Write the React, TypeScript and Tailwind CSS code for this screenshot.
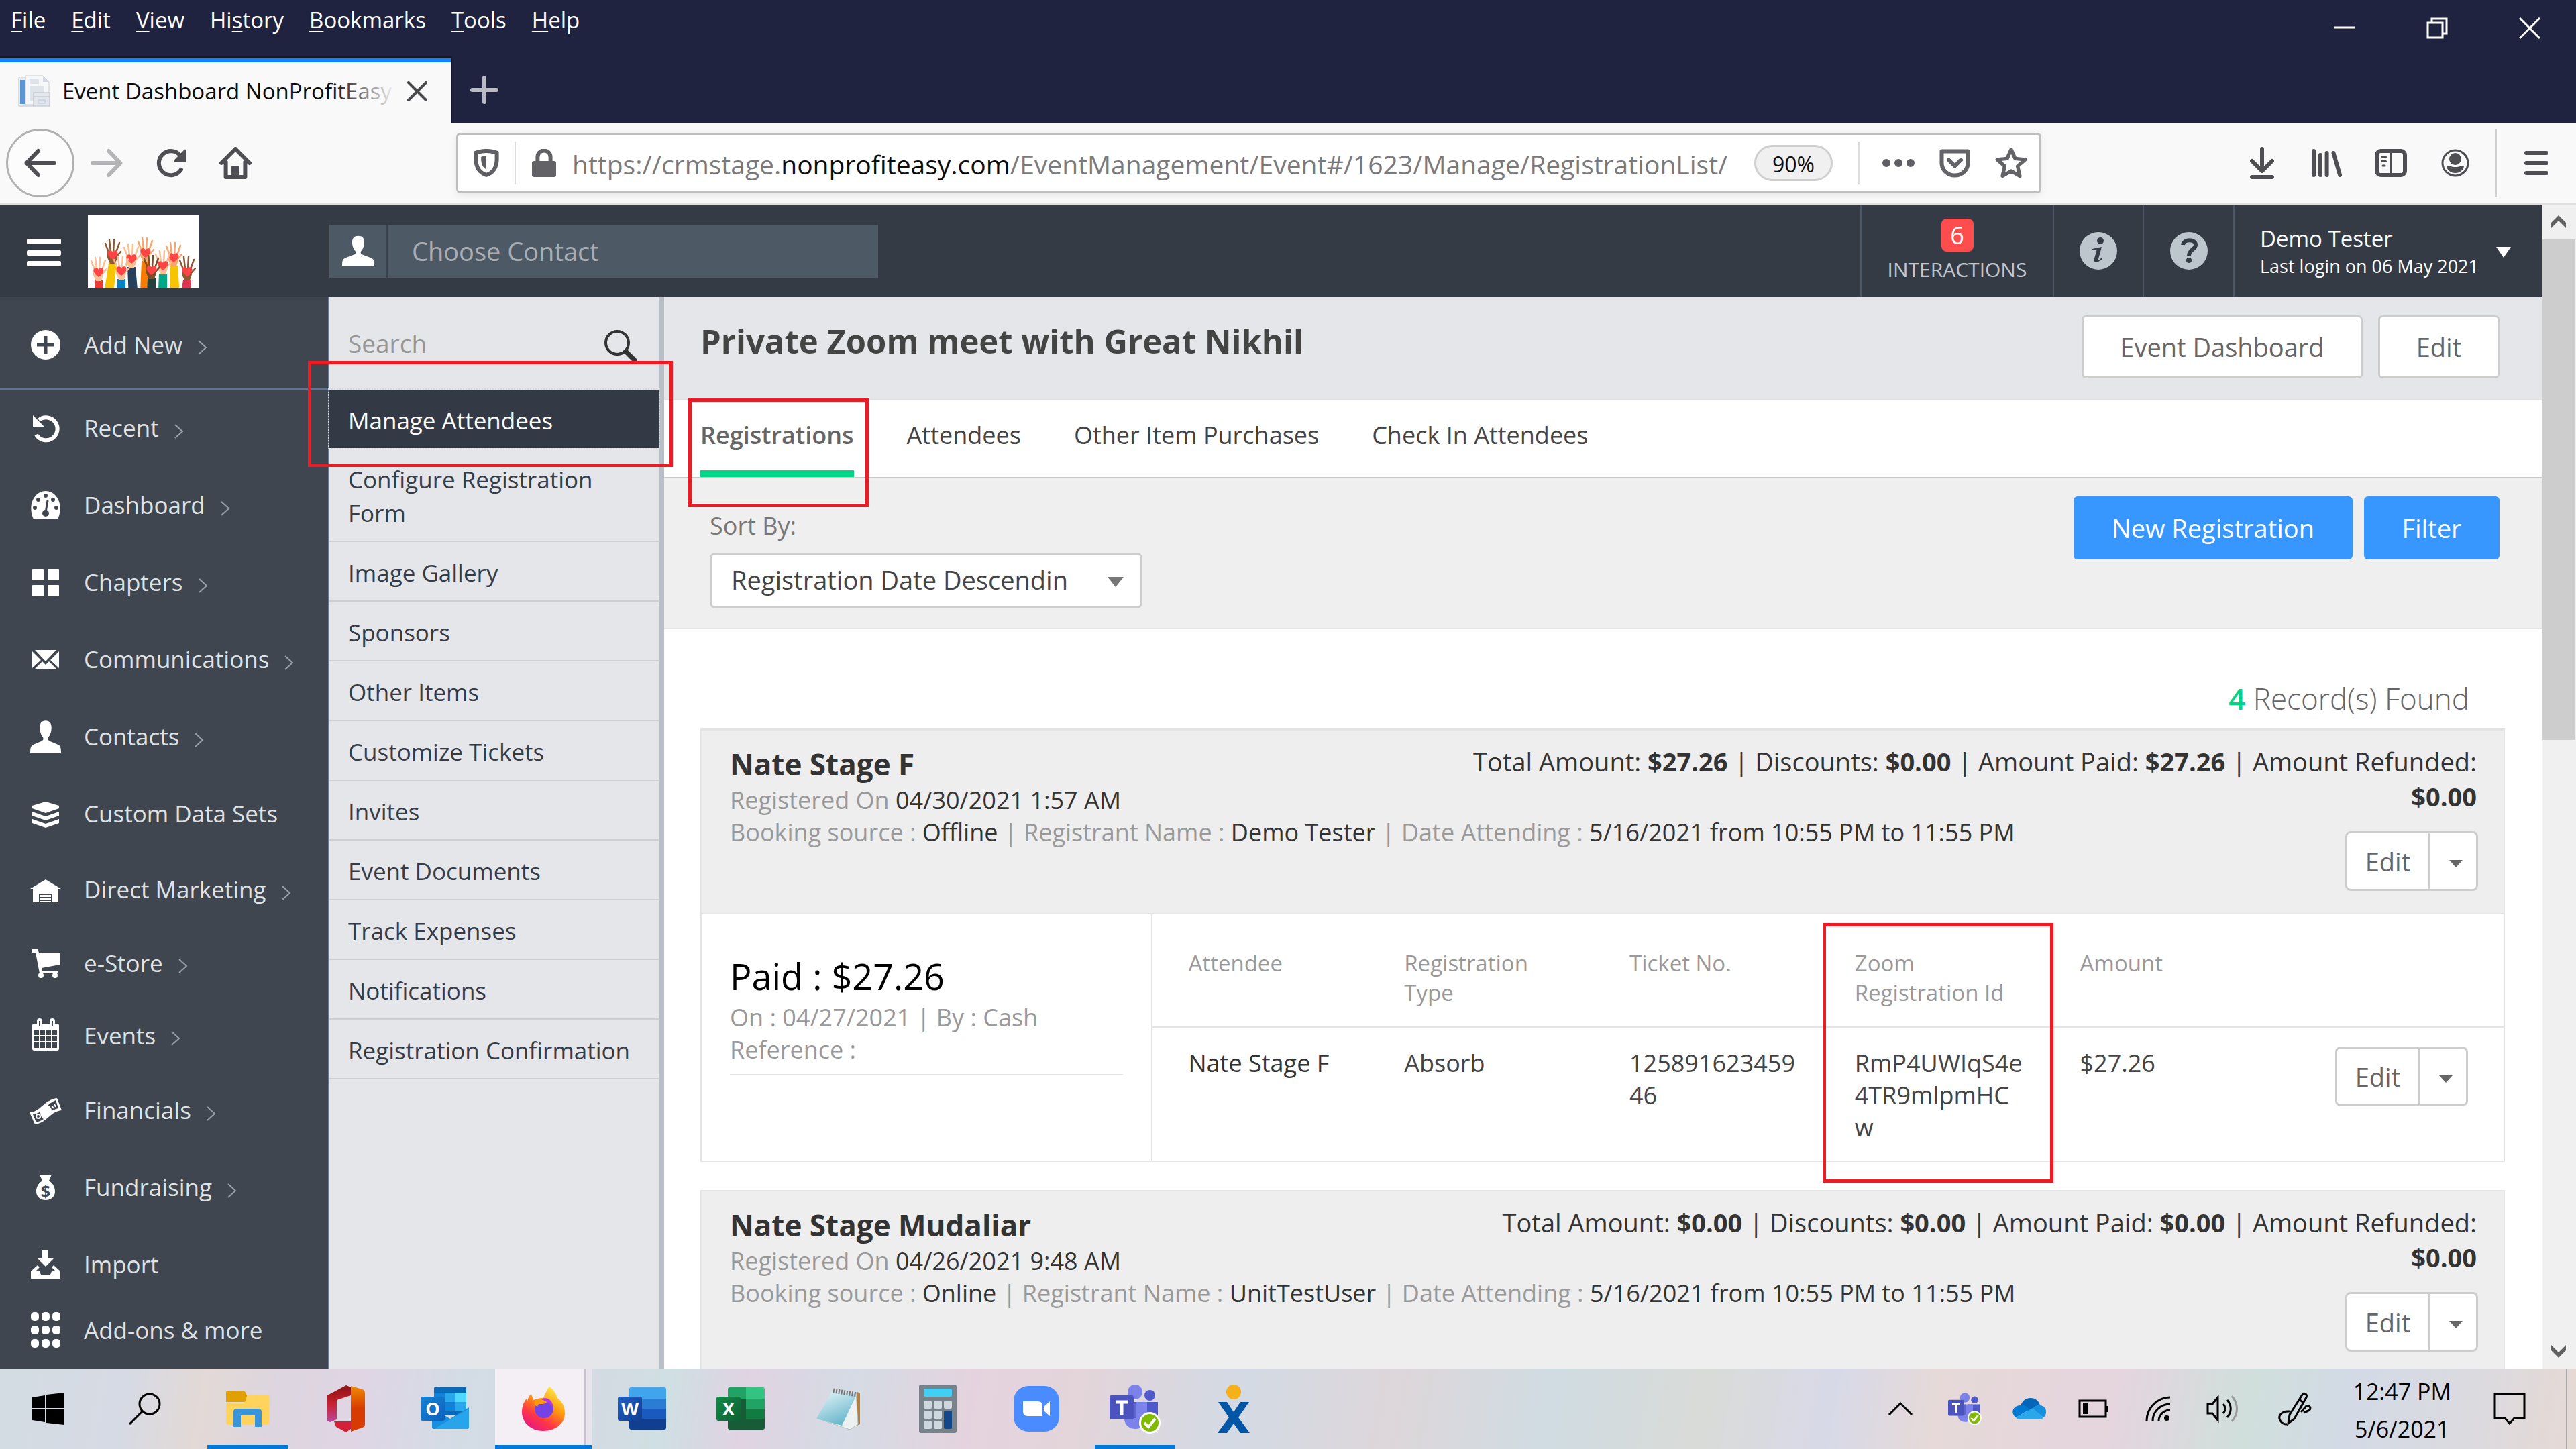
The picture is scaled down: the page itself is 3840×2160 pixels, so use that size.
import type { ReactNode } from "react";

const menus = [
  { pre: "", key: "F", rest: "ile" },
  { pre: "", key: "E", rest: "dit" },
  { pre: "", key: "V", rest: "iew" },
  { pre: "Hi", key: "s", rest: "tory" },
  { pre: "", key: "B", rest: "ookmarks" },
  { pre: "", key: "T", rest: "ools" },
  { pre: "", key: "H", rest: "elp" },
];

type Totals = { total: string; discounts: string; paid: string; refunded: string };

type Attendee = {
  name: string;
  type: string;
  ticket: string;
  zoomId: string;
  amount: string;
};

type Registration = {
  name: string;
  registeredOn: string;
  source: string;
  registrant: string;
  attending: string;
  totals: Totals;
  payment?: { amount: string; on: string; by: string };
  attendees: Attendee[];
};

const registrations: Registration[] = [
  {
    name: "Nate Stage F",
    registeredOn: "04/30/2021 1:57 AM",
    source: "Offline",
    registrant: "Demo Tester",
    attending: "5/16/2021 from 10:55 PM to 11:55 PM",
    totals: { total: "$27.26", discounts: "$0.00", paid: "$27.26", refunded: "$0.00" },
    payment: { amount: "$27.26", on: "04/27/2021", by: "Cash" },
    attendees: [
      {
        name: "Nate Stage F",
        type: "Absorb",
        ticket: "12589162345946",
        zoomId: "RmP4UWIqS4e4TR9mlpmHCw",
        amount: "$27.26",
      },
    ],
  },
  {
    name: "Nate Stage Mudaliar",
    registeredOn: "04/26/2021 9:48 AM",
    source: "Online",
    registrant: "UnitTestUser",
    attending: "5/16/2021 from 10:55 PM to 11:55 PM",
    totals: { total: "$0.00", discounts: "$0.00", paid: "$0.00", refunded: "$0.00" },
    attendees: [],
  },
];

const subMenu = [
  "Image Gallery",
  "Sponsors",
  "Other Items",
  "Customize Tickets",
  "Invites",
  "Event Documents",
  "Track Expenses",
  "Notifications",
  "Registration Confirmation",
];

/* ---------- Sidebar icons, all on a 48 grid ---------- */

function Glyph({ children }: { children: ReactNode }) {
  return (
    <svg width="48" height="56" viewBox="0 -4 48 56" fill="#fff" className="shrink-0" aria-hidden="true">
      {children}
    </svg>
  );
}

const PersonPath =
  "M24 -3c-6 0-9 4-9 11 0 6 1 11 5 17 1 3 0 5-3 6L4 37c-3 2-4 5-4 14h48c0-9-1-12-4-14l-13-6c-3-1-4-3-3-6 4-6 5-11 5-17 0-7-3-11-9-11z";

const icons: Record<string, ReactNode> = {
  add: (
    <Glyph>
      <circle cx="24" cy="24" r="22" />
      <path d="M24 11v26M11 24h26" stroke="#404650" strokeWidth="5" />
    </Glyph>
  ),
  recent: (
    <Glyph>
      <path d="M14 11a17 17 0 1 1-4 22" fill="none" stroke="#fff" strokeWidth="6" />
      <path d="M5 4v17h17z" />
    </Glyph>
  ),
  dashboard: (
    <Glyph>
      <path d="M6 44C-4 22 8 2 24 2s28 20 18 42z" />
      <g fill="#404650">
        <circle cx="24" cy="9" r="3" />
        <circle cx="13" cy="15" r="3" />
        <circle cx="35" cy="15" r="3" />
        <circle cx="8" cy="27" r="3" />
        <circle cx="40" cy="27" r="3" />
        <circle cx="24" cy="35" r="5" />
      </g>
      <path d="M24 34l3-18" stroke="#404650" strokeWidth="3" />
    </Glyph>
  ),
  chapters: (
    <Glyph>
      <rect x="4" y="3" width="17" height="17" rx="1" />
      <rect x="27" y="3" width="17" height="17" rx="1" />
      <rect x="4" y="27" width="17" height="17" rx="1" />
      <rect x="27" y="27" width="17" height="17" rx="1" />
    </Glyph>
  ),
  mail: (
    <Glyph>
      <path d="M8 9h32L24 26zM4 11l13 13L4 36zM44 11L31 24l13 12zM7 38l12-12 5 5 5-5 12 12z" />
    </Glyph>
  ),
  contacts: (
    <Glyph>
      <path d={PersonPath} transform="translate(1 2) scale(.96 .9)" />
    </Glyph>
  ),
  data: (
    <Glyph>
      <path d="M24 5l20 6v4l-20 7-20-7v-4z" />
      <path d="M4 20l20 7 20-7v6l-20 7-20-7zM4 31l20 7 20-7v6l-20 7-20-7z" />
    </Glyph>
  ),
  marketing: (
    <Glyph>
      <path d="M24 8l23 14h-4v20H5V22H1z" />
      <path d="M15 42V30h18v12M15 35h18M15 39h18" fill="none" stroke="#404650" strokeWidth="2" />
    </Glyph>
  ),
  store: (
    <Glyph>
      <path d="M3 3h9l2 5h31v18l-27 5 1 4h24v4H15L9 8H3z" />
      <circle cx="17" cy="42" r="4" />
      <circle cx="38" cy="42" r="4" />
    </Glyph>
  ),
  events: (
    <Glyph>
      <rect x="4" y="6" width="40" height="40" rx="3" />
      <rect x="11" y="-2" width="8" height="14" rx="4" />
      <rect x="30" y="-2" width="8" height="14" rx="4" />
      <path d="M15 2v8M34 2v8" stroke="#404650" strokeWidth="2" />
      <path
        d="M7 16h7v7H7zM16 16h7v7h-7zM25 16h7v7h-7zM34 16h7v7h-7zM7 25h7v7H7zM16 25h7v7h-7zM25 25h7v7h-7zM34 25h7v7h-7zM7 34h7v8H7zM16 34h7v8h-7zM25 34h7v8h-7zM34 34h7v8h-7z"
        fill="#404650"
      />
    </Glyph>
  ),
  financials: (
    <Glyph>
      <path d="M0 26c16 0 22-19 41-21l7 18C30 25 26 42 8 44z" />
      <path d="M5 29c4 0 8-2 11-4 0 6 2 9 5 11-3 2-7 4-11 5zM27 16c3-3 7-6 12-8l4 12c-4 1-7 2-10 4 0-4-2-7-6-8z" fill="#404650" />
      <circle cx="13" cy="32" r="3" fill="none" stroke="#fff" strokeWidth="2" />
      <path d="M33 16l3 4M37 14l2 4" stroke="#fff" strokeWidth="2" />
    </Glyph>
  ),
  fundraising: (
    <Glyph>
      <path d="M15 4h18l-4 9h-10zM18 14h12c5 3 8 9 8 15 0 8-6 13-14 13s-14-5-14-13c0-6 3-12 8-15z" />
      <text x="24" y="38" textAnchor="middle" fontFamily="Open Sans, sans-serif" fontWeight="700" fontSize="25" fill="#404650">
        $
      </text>
    </Glyph>
  ),
  import: (
    <Glyph>
      <path d="M19 1h9v13h8L24 26 12 14h7z" />
      <path d="M12 24L2 33v11h44V33L36 24l-3 3 6 6h-6l-2 5H17l-2-5H9l6-6z" />
    </Glyph>
  ),
  addons: (
    <Glyph>
      {[4, 24, 44].map((y) =>
        [8, 24, 40].map((x) => <rect key={`${x}-${y}`} x={x - 6} y={y - 7} width="12" height="13" rx="5" />)
      )}
    </Glyph>
  ),
};

const sideLinks = [
  { label: "Recent", icon: "recent", more: true, height: "h-[115px]" },
  { label: "Dashboard", icon: "dashboard", more: true, height: "h-[115px]" },
  { label: "Chapters", icon: "chapters", more: true, height: "h-[115px]" },
  { label: "Communications", icon: "mail", more: true, height: "h-[115px]" },
  { label: "Contacts", icon: "contacts", more: true, height: "h-[115px]" },
  { label: "Custom Data Sets", icon: "data", more: false, height: "h-[115px]" },
  { label: "Direct Marketing", icon: "marketing", more: true, height: "h-[111px]" },
  { label: "e-Store", icon: "store", more: true, height: "h-[108px]" },
  { label: "Events", icon: "events", more: true, height: "h-[108px]" },
  { label: "Financials", icon: "financials", more: true, height: "h-[115px]" },
  { label: "Fundraising", icon: "fundraising", more: true, height: "h-[115px]" },
  { label: "Import", icon: "import", more: false, height: "h-[115px]" },
  { label: "Add-ons & more", icon: "addons", more: false, height: "h-[80px]" },
];

function MoreArrow() {
  return (
    <svg width="16" height="28" viewBox="0 0 16 28" fill="none" stroke="#9a9fa6" strokeWidth="2" className="mt-2 ml-[22px]">
      <path d="M2 4l11 10L2 24" />
    </svg>
  );
}

/* ---------- Browser chrome ---------- */

function TitleBar() {
  return (
    <div className="bg-[#20233f]">
      <div className="flex items-start justify-between text-white">
        <nav className="flex h-[60px] items-center gap-[38px] pl-4 text-[33px]">
          {menus.map((m) => (
            <button key={m.key + m.rest}>
              {m.pre}
              <span className="underline decoration-2 underline-offset-4">{m.key}</span>
              {m.rest}
            </button>
          ))}
        </nav>
        <div className="flex h-[84px] items-center">
          <button aria-label="Minimize" className="flex w-[138px] justify-center">
            <svg width="32" height="32" viewBox="0 0 32 32">
              <path d="M0 15h32" stroke="#fff" strokeWidth="3" />
            </svg>
          </button>
          <button aria-label="Restore" className="flex w-[138px] justify-center">
            <svg width="32" height="32" viewBox="0 0 32 32" fill="none" stroke="#fff" strokeWidth="3">
              <path d="M2 8h22v22H2zM8 8V2h22v22h-6" />
            </svg>
          </button>
          <button aria-label="Close" className="flex w-[138px] justify-center">
            <svg width="32" height="32" viewBox="0 0 32 32" stroke="#fff" strokeWidth="3">
              <path d="M1 1l30 30M31 1L1 31" />
            </svg>
          </button>
        </div>
      </div>
      <div className="flex h-[99px]">
        <div className="w-[674px] border-t-[3px] border-r-2 border-[#16172c]">
          <div className="flex h-full items-center border-t-[6px] border-[#0a84ff] bg-[#f9f9fa] pb-1 pl-[27px]">
            <svg width="48" height="48" viewBox="0 0 48 48" className="shrink-0">
              <rect x="1" y="4" width="22" height="42" fill="#e7edf4" stroke="#b9c3cf" />
              <rect x="3" y="7" width="9" height="36" fill="#5b93d3" />
              <path d="M11 1h26l9 9v34H11z" fill="#f6f7f9" stroke="#c7ccd3" />
              <path d="M37 1v9h9z" fill="#d6dae0" />
              <path d="M17 6h14v7H17zM17 16h22v22H17z" fill="#dfe3ea" />
              <rect x="23" y="26" width="24" height="20" fill="#e3e7ed" stroke="#b9bfc8" />
              <path d="M23 32h24" stroke="#b9bfc8" />
              <rect x="30" y="37" width="10" height="5" fill="none" stroke="#b9c9de" />
            </svg>
            <div className="relative ml-[18px] w-[498px] overflow-hidden text-[33px] whitespace-nowrap text-[#0c0c0d]">
              Event Dashboard NonProfitEasy
              <div className="absolute inset-y-0 right-0 w-24 bg-linear-to-r from-transparent to-[#f9f9fa]" />
            </div>
            <button aria-label="Close tab" className="ml-4">
              <svg width="30" height="30" viewBox="0 0 30 30" stroke="#4a4a4f" strokeWidth="4" strokeLinecap="round">
                <path d="M2 2l26 26M28 2L2 28" />
              </svg>
            </button>
          </div>
        </div>
        <button aria-label="New tab" className="flex w-24 items-center justify-center">
          <svg width="42" height="42" viewBox="0 0 42 42" stroke="#b9bac4" strokeWidth="6" strokeLinecap="round">
            <path d="M21 3v36M3 21h36" />
          </svg>
        </button>
      </div>
    </div>
  );
}

function ToolButton({ label, wide, children }: { label: string; wide?: boolean; children: ReactNode }) {
  return (
    <button aria-label={label} className={`flex shrink-0 items-center justify-center ${wide ? "w-24" : "w-[84px]"}`}>
      {children}
    </button>
  );
}

function Toolbar() {
  return (
    <div className="flex h-[123px] items-center border-b-[3px] border-[#e0e0e1] bg-[#f9f9fa] pl-[9px]">
      <button
        aria-label="Back"
        className="flex size-[102px] shrink-0 items-center justify-center rounded-full border-[3px] border-[#b1b1b1] bg-[#fcfcfc]"
      >
        <svg width="48" height="48" viewBox="0 0 16 16" fill="none" stroke="#4f4f53" strokeWidth="2" strokeLinecap="round" strokeLinejoin="round">
          <path d="M15 8H1.500M7 2L1.200 8 7 14" />
        </svg>
      </button>
      <ToolButton label="Forward" wide>
        <svg width="48" height="48" viewBox="0 0 16 16" fill="none" stroke="#b4b4b6" strokeWidth="2" strokeLinecap="round" strokeLinejoin="round">
          <path d="M1 8h13.500M9 2l5.800 6L9 14" />
        </svg>
      </ToolButton>
      <ToolButton label="Reload" wide>
        <svg width="48" height="48" viewBox="0 0 16 16" fill="none" stroke="#4f4f53" strokeWidth="2" strokeLinecap="round">
          <path d="M13 11.300A6 6 0 1 1 12.800 4.500" />
          <path d="M15 1.700V7H9.800z" fill="#4f4f53" stroke="#4f4f53" strokeWidth="1" strokeLinejoin="round" />
        </svg>
      </ToolButton>
      <ToolButton label="Home" wide>
        <svg width="48" height="48" viewBox="0 0 16 16" fill="none" stroke="#4f4f53" strokeWidth="2" strokeLinecap="round" strokeLinejoin="round">
          <path d="M1 8l7-7 7 7M3.200 7.500V15h9.600V7.500" />
          <path d="M6.500 15v-5h3v5z" fill="#4f4f53" strokeWidth="1" />
        </svg>
      </ToolButton>

      <div className="mx-[281px] flex h-[90px] min-w-0 flex-1 items-center rounded-md border-[3px] border-[#bebebe] bg-white shadow-[0_3px_12px_rgba(0,0,0,0.08)]">
        <ToolButton label="Tracking protection">
          <svg width="42" height="42" viewBox="0 0 14 14" fill="#5f5f63">
            <path d="M7 0C5 0 2.500.500 1.300 1 1 1.100.8 1.400.8 1.700V5c0 5 2.500 8 6.200 9 3.700-1 6.200-4 6.200-9V1.700c0-.3-.2-.6-.5-.7C11.500.5 9 0 7 0zm0 2c1.500 0 3 .3 4.200.7V5c0 3.800-1.600 6-4.200 6.900C4.400 11 2.800 8.800 2.800 5V2.700C4 2.300 5.500 2 7 2z" />
            <path d="M7 3.500c-1 0-1.800.1-2.600.4V5c0 2.600.9 4.300 2.600 5.200z" />
          </svg>
        </ToolButton>
        <span className="h-16 w-[2px] bg-[#dcdcde]" />
        <ToolButton label="Connection secure">
          <svg width="42" height="42" viewBox="0 0 14 14" fill="#636367">
            <rect x="1" y="6" width="12" height="8" rx="1" />
            <path d="M3.800 6.500V4a3.200 3.200 0 0 1 6.400 0v2.500" fill="none" stroke="#636367" strokeWidth="2" />
          </svg>
        </ToolButton>
        <div role="textbox" aria-label="Address" className="min-w-0 flex-1 overflow-hidden pt-1 text-[39px] whitespace-nowrap text-[#7a7a7c]">
          https://crmstage.<span className="text-[#0c0c0d]">nonprofiteasy.com</span>
          /EventManagement/Event#/1623/Manage/RegistrationList/
        </div>
        <button className="mr-[38px] flex h-[54px] w-[117px] shrink-0 items-center justify-center rounded-full border-[3px] border-[#cfcfd0] bg-[#f0f0f1] pt-1 text-[32px] text-[#0c0c0d]">
          90%
        </button>
        <span className="mr-4 h-16 w-[2px] bg-[#dcdcde]" />
        <ToolButton label="Page actions">
          <svg width="50" height="14" viewBox="0 0 50 14" fill="#5f5f63">
            <circle cx="7" cy="7" r="6" />
            <circle cx="25" cy="7" r="6" />
            <circle cx="43" cy="7" r="6" />
          </svg>
        </ToolButton>
        <ToolButton label="Save to Pocket">
          <svg width="48" height="48" viewBox="0 0 16 16" fill="none" stroke="#636367" strokeWidth="2" strokeLinecap="round" strokeLinejoin="round">
            <path d="M1.500 2.200h13V8A6.500 6.200 0 0 1 1.500 8z" />
            <path d="M5 6.500l3 3 3-3" />
          </svg>
        </ToolButton>
        <ToolButton label="Bookmark this page">
          <svg width="48" height="48" viewBox="0 0 16 16" fill="none" stroke="#636367" strokeWidth="1.800" strokeLinejoin="round">
            <path d="M8 1.300l2 4.500 4.900.5-3.700 3.300 1.100 4.900L8 12l-4.300 2.500 1.100-4.900L1.100 6.300 6 5.800z" />
          </svg>
        </ToolButton>
      </div>

      <ToolButton label="Downloads" wide>
        <svg width="48" height="48" viewBox="0 0 16 16" fill="none" stroke="#4f4f53" strokeWidth="2" strokeLinecap="round" strokeLinejoin="round">
          <path d="M8 1v10M3 7l5 5 5-5M3 15h10" />
        </svg>
      </ToolButton>
      <ToolButton label="Library" wide>
        <svg width="48" height="48" viewBox="0 0 16 16" fill="none" stroke="#4f4f53" strokeWidth="2" strokeLinecap="round">
          <path d="M1.700 2v12M5 4v10M8.200 3v11M11.500 3l3.200 11" />
        </svg>
      </ToolButton>
      <ToolButton label="Sidebars" wide>
        <svg width="48" height="48" viewBox="0 0 16 16" fill="none" stroke="#4f4f53" strokeWidth="2" strokeLinecap="round">
          <rect x="1" y="2" width="14" height="12" rx="2" />
          <path d="M8 2v12" strokeWidth="1" />
          <path d="M3.500 5h2M3.500 7.200h2M4 9.300h1" strokeWidth="1" />
        </svg>
      </ToolButton>
      <ToolButton label="Account" wide>
        <svg width="44" height="44" viewBox="0 0 44 44">
          <circle cx="22" cy="22" r="19" fill="none" stroke="#4f4f53" strokeWidth="3" />
          <circle cx="22" cy="16" r="9" fill="#4f4f53" />
          <path d="M9 26c4 0 7 2 13 2s9-2 13-2c0 6-6 11-13 11S9 32 9 26z" fill="#4f4f53" />
        </svg>
      </ToolButton>
      <span className="ml-3 h-[102px] w-[2px] bg-[#cfcfd0]" />
      <button aria-label="Open menu" className="flex w-[118px] shrink-0 justify-center">
        <svg width="36" height="36" viewBox="0 0 36 36" stroke="#4f4f53" strokeWidth="6" strokeLinecap="round">
          <path d="M3 3h30M3 18h30M3 33h30" />
        </svg>
      </button>
    </div>
  );
}

/* ---------- App header ---------- */

const hands = [
  { x: 86, y: 55, skin: "#f6a76b", sleeve: "#f57c00", lean: 0 },
  { x: 37, y: 58, skin: "#8d5a33", sleeve: "#f7c500", lean: -5 },
  { x: 65, y: 64, skin: "#fbc093", sleeve: "#24405a", lean: 4 },
  { x: 128, y: 62, skin: "#f6a76b", sleeve: "#f7c500", lean: 3 },
  { x: 16, y: 84, skin: "#fbc093", sleeve: "#ee3932", lean: 3 },
  { x: 50, y: 82, skin: "#fbc093", sleeve: "#0082c3", lean: 0 },
  { x: 112, y: 74, skin: "#fbc093", sleeve: "#00a885", lean: 0 },
  { x: 95, y: 81, skin: "#7b4b2a", sleeve: "#26413c", lean: 0 },
  { x: 148, y: 83, skin: "#8d5a33", sleeve: "#dc3550", lean: -4 },
];

function Logo() {
  return (
    <svg width="165" height="109" viewBox="0 0 165 109" className="ml-10 shrink-0 bg-white" role="img" aria-label="Organization logo">
      {hands.map((h) => (
        <g key={h.x} transform={`translate(${h.x} ${h.y})`}>
          <path d={`M-6 14h12l${h.lean} 46h-14z`} fill={h.sleeve} />
          <g stroke={h.skin} strokeWidth="2.500" strokeLinecap="round">
            <path d="M-6 -2l-5 -13M-3 -3l-2 -17M1 -3l1 -17M5 -2l5 -14M6 4l6 -7" />
          </g>
          <path d="M-8 -3h15v9l-3 9h-8l-4-9z" fill={h.skin} />
          <path d="M0 9c-8-6-8-9-7-12 2-3 6-2 7 1 1-3 5-4 7-1 1 3 1 6-7 12z" fill="#ff4446" />
        </g>
      ))}
    </svg>
  );
}

function AppHeader() {
  return (
    <header className="flex h-[136px] shrink-0 items-center bg-[#353b45]">
      <button aria-label="Toggle navigation" className="ml-10 pt-[6px]">
        <svg width="51" height="42" viewBox="0 0 51 42" fill="#fff">
          <rect width="51" height="8" rx="2" />
          <rect y="17" width="51" height="8" rx="2" />
          <rect y="33" width="51" height="8" rx="2" />
        </svg>
      </button>
      <Logo />
      <div className="ml-[195px] flex h-[79px] w-[818px] bg-[#4d5964]">
        <div className="flex w-[87px] items-center justify-center border-r-2 border-[#39424c]">
          <svg width="48" height="46" viewBox="0 -4 48 56" preserveAspectRatio="none" fill="#fff">
            <path d={PersonPath} />
          </svg>
        </div>
        <input
          aria-label="Choose Contact"
          placeholder="Choose Contact"
          className="min-w-0 flex-1 bg-transparent pl-9 text-[38px] text-white outline-none placeholder:text-[#a8adb3]"
        />
      </div>
      <div className="ml-auto flex h-full">
        <a href="#interactions" className="flex w-[287px] flex-col items-center border-l-2 border-[#4b5666] pt-5">
          <span className="flex h-[49px] w-12 items-center justify-center rounded-lg bg-[#ff4c4c] text-[36px] text-white">6</span>
          <span className="mt-[7px] text-[30px] leading-10 text-[#c0c6cd]">INTERACTIONS</span>
        </a>
        <button aria-label="Information" className="flex w-[134px] items-center justify-center border-l-2 border-[#4b5666]">
          <svg width="58" height="58" viewBox="0 0 58 58">
            <circle cx="29" cy="29" r="28" fill="#bdc5cd" />
            <circle cx="32" cy="14" r="5" fill="#353b45" />
            <path d="M20 26c5-1 9-2 14-3l-5 18c-1 3 1 2 5-2l1 2c-8 7-14 6-12-1l3-10c1-3 0-3-6-2z" fill="#353b45" />
          </svg>
        </button>
        <button aria-label="Help" className="flex w-[135px] items-center justify-center border-l-2 border-[#4b5666]">
          <svg width="58" height="58" viewBox="0 0 58 58">
            <circle cx="29" cy="29" r="28" fill="#bdc5cd" />
            <path d="M20 20c1-9 19-9 19 0 0 7-10 7-10 16" fill="none" stroke="#353b45" strokeWidth="6" />
            <circle cx="29" cy="43" r="4" fill="#353b45" />
          </svg>
        </button>
        <button className="flex w-[460px] items-center border-l-2 border-[#4b5666] pt-1 pl-[38px] text-left text-white">
          <span className="leading-[41px]">
            <span className="block text-[33px]">Demo Tester</span>
            <span className="block text-[27px]">Last login on 06 May 2021</span>
          </span>
          <svg width="22" height="16" viewBox="0 0 22 16" fill="#fff" className="ml-[26px]">
            <path d="M0 0h22L11 16z" />
          </svg>
        </button>
      </div>
    </header>
  );
}

function Sidebar() {
  return (
    <nav className="w-[491px] shrink-0 border-r-2 border-[#69778a] bg-[#404650] text-[35px] text-[#dfe2e5]">
      <a href="#add" className="flex h-[139px] items-center border-b-[3px] border-[#64758c] pt-2 pl-11">
        {icons.add}
        <span className="ml-[33px]">Add New</span>
        <MoreArrow />
      </a>
      {sideLinks.map((l) => (
        <a key={l.label} href={`#${l.icon}`} className={`flex items-center pl-11 ${l.height}`}>
          {icons[l.icon]}
          <span className="ml-[33px]">{l.label}</span>
          {l.more && <MoreArrow />}
        </a>
      ))}
    </nav>
  );
}

function SubMenu() {
  return (
    <nav className="w-[499px] shrink-0 border-r-8 border-[#b8bfc6] bg-[#e4e6ea] text-[35px] leading-[50px] text-[#363c47]">
      <div className="flex h-[139px] items-center justify-between pr-8 pl-7">
        <input
          aria-label="Search"
          placeholder="Search"
          className="w-80 bg-transparent text-[37px] outline-none placeholder:text-[#969696]"
        />
        <svg width="50" height="50" viewBox="0 0 50 50" fill="none" stroke="#333" className="mt-2">
          <circle cx="20" cy="20" r="17" strokeWidth="4" />
          <path d="M33 33l13 13" strokeWidth="7" strokeLinecap="round" />
        </svg>
      </div>
      <a
        href="#manage"
        className="relative flex h-[87px] items-center bg-[#343a45] pt-1 pl-7 text-white outline-2 outline-[#d5d7da] outline-dotted"
      >
        Manage Attendees
        <span className="absolute -top-[43px] -right-[21px] -bottom-7 -left-8 z-10 border-[5px] border-[#ed1c24]" />
      </a>
      <a href="#form" className="block border-b-2 border-[#cbced2] pt-[22px] pr-12 pb-4 pl-7">
        Configure Registration Form
      </a>
      {subMenu.map((s) => (
        <a key={s} href="#sub" className="flex h-[89px] items-center border-b-2 border-[#cbced2] pt-1 pl-7 whitespace-nowrap">
          {s}
        </a>
      ))}
    </nav>
  );
}

/* ---------- Registrations ---------- */

function EditSplit() {
  return (
    <div className="inline-flex h-[89px] w-[198px] rounded-lg border-[3px] border-[#cdcdcd] bg-white text-[38px] text-[#666]">
      <button className="flex-1">Edit</button>
      <button aria-label="More actions" className="flex w-[71px] items-center justify-center border-l-2 border-[#cdcdcd] pl-2">
        <svg width="20" height="11" viewBox="0 0 20 11" fill="#666" className="mt-2">
          <path d="M0 0h20L10 11z" />
        </svg>
      </button>
    </div>
  );
}

function RegistrationCard({ reg }: { reg: Registration }) {
  const { totals, payment } = reg;
  return (
    <article className="mb-[42px] border-2 border-[#e3e4e4] text-[36px] leading-[48px] first-of-type:border-t-4">
      <div className="border-b-2 border-[#e3e4e4] bg-[#eee] pt-5 pr-[38px] pb-[33px] pl-[42px] text-[#999]">
        <div className="flex justify-between">
          <div>
            <h3 className="text-[44px] leading-[60px] font-bold text-[#333]">{reg.name}</h3>
            <p>
              Registered On <span className="text-[#333]">{reg.registeredOn}</span>
            </p>
          </div>
          <p className="w-[1520px] pr-[2px] text-right text-[38px] leading-[52px] text-[#333]">
            Total Amount: <b>{totals.total}</b> | Discounts: <b>{totals.discounts}</b> | Amount Paid: <b>{totals.paid}</b> | Amount
            Refunded: <b>{totals.refunded}</b>
          </p>
        </div>
        <div className="flex justify-between">
          <p>
            Booking source : <span className="text-[#333]">{reg.source}</span> | Registrant Name :{" "}
            <span className="text-[#333]">{reg.registrant}</span> | Date Attending : <span className="text-[#333]">{reg.attending}</span>
          </p>
          <div className="mt-[22px] flex">
            <EditSplit />
          </div>
        </div>
      </div>

      {payment && (
        <div className="flex">
          <div className="w-1/4 border-r-2 border-[#e3e4e4] px-[42px] pt-[54px] text-[#999]">
            <p className="text-[54px] leading-[76px] text-black">Paid : {payment.amount}</p>
            <div className="border-b-2 border-[#e3e4e4] pb-3">
              <p>
                On : {payment.on} | By : {payment.by}
              </p>
              <p>Reference :</p>
            </div>
          </div>
          <table className="w-3/4 table-fixed text-left align-top text-[#444]">
            <thead>
              <tr className="border-b-2 border-[#e3e4e4] align-top text-[33px] leading-[44px] text-[#999]">
                <th className="pt-[51px] pb-7 pl-[54px] font-normal">Attendee</th>
                <th className="pt-[51px] pr-[42px] pb-7 pl-10 font-normal">Registration Type</th>
                <th className="pt-[51px] pl-10 font-normal">Ticket No.</th>
                <th className="relative pt-[51px] pr-[42px] pb-7 pl-10 font-normal">
                  Zoom Registration Id
                  <span className="absolute top-[13px] right-0 -left-2 h-[387px] border-[5px] border-[#ed1c24]" />
                </th>
                <th className="pt-[51px] pl-10 font-normal">Amount</th>
                <th aria-label="Actions" />
              </tr>
            </thead>
            <tbody>
              {reg.attendees.map((a) => (
                <tr key={a.ticket} className="align-top">
                  <td className="pt-[29px] pl-[54px] text-[#333]">{a.name}</td>
                  <td className="pt-[29px] pl-10">{a.type}</td>
                  <td className="pt-[29px] pr-[42px] pl-10 break-all">{a.ticket}</td>
                  <td className="pt-[29px] pr-[42px] pb-[25px] pl-10 break-all">{a.zoomId}</td>
                  <td className="pt-[29px] pl-10">{a.amount}</td>
                  <td className="pt-7 pr-[53px] text-right leading-none">
                    <EditSplit />
                  </td>
                </tr>
              ))}
            </tbody>
          </table>
        </div>
      )}
    </article>
  );
}

function Content() {
  return (
    <main className="min-w-0 flex-1 overflow-hidden bg-white">
      <div className="flex h-[154px] justify-between border-b-2 border-[#e2e3e3] bg-[#e4e6ea] pt-7 pr-[63px] pl-[54px]">
        <h1 className="text-[49px] leading-[76px] font-bold text-[#444]">Private Zoom meet with Great Nikhil</h1>
        <div className="flex h-[94px] gap-[23px] text-[38px] text-[#666]">
          <button className="w-[419px] rounded-md border-[3px] border-[#cdcdcd] bg-white">Event Dashboard</button>
          <button className="w-[181px] rounded-md border-[3px] border-[#cdcdcd] bg-white">Edit</button>
        </div>
      </div>

      <div className="flex gap-[79px] border-b-2 border-[#c9c9c9] pl-[54px] text-[36px] text-[#444]">
        <button className="relative h-[115px] border-b-10 border-[#00d588] font-semibold text-[#666]">
          Registrations
          <span className="absolute -top-[2px] -right-[22px] -bottom-[55px] -left-[18px] border-[5px] border-[#ed1c24]" />
        </button>
        <button className="border-b-10 border-transparent">Attendees</button>
        <button className="border-b-10 border-transparent">Other Item Purchases</button>
        <button className="border-b-10 border-transparent">Check In Attendees</button>
      </div>

      <div className="flex justify-between border-b-2 border-[#e2e3e3] bg-[#efefef] pr-[63px] pl-[68px]">
        <div className="pt-[46px] pb-[29px]">
          <label htmlFor="sort" className="block text-[36px] leading-[50px] text-[#777]">
            Sort By:
          </label>
          <div className="relative mt-[15px]">
            <select
              id="sort"
              className="h-[83px] w-[645px] appearance-none rounded-lg border-[3px] border-[#cdcdcd] bg-white pb-[2px] pl-[29px] text-[38px] text-[#444]"
            >
              <option>Registration Date Descendin</option>
            </select>
            <svg width="24" height="15" viewBox="0 0 24 15" fill="#777" className="pointer-events-none absolute top-9 right-[28px]">
              <path d="M0 0h24L12 15z" />
            </svg>
          </div>
        </div>
        <div className="mt-[27px] flex h-[94px] gap-[17px] text-[38px] text-white">
          <button className="w-[416px] rounded-md bg-[#3896ff]">New Registration</button>
          <button className="w-[202px] rounded-md bg-[#3896ff]">Filter</button>
        </div>
      </div>

      <div className="pr-[55px] pl-[54px]">
        <p className="pt-[73px] pr-[53px] pb-[14px] text-right text-[44px] leading-[60px] font-light text-[#666]">
          <span className="font-semibold text-[#00d588]">4</span> Record(s) Found
        </p>
        <div>
          {registrations.map((r) => (
            <RegistrationCard key={r.name} reg={r} />
          ))}
        </div>
      </div>
    </main>
  );
}

function Scrollbar() {
  return (
    <div className="flex w-[51px] shrink-0 flex-col items-center bg-[#f0f0f0]">
      <svg width="51" height="51" viewBox="0 0 51 51" className="shrink-0" fill="#606060">
        <path d="M14 34v-8l11-11 11 11v8L25 23z" />
      </svg>
      <div className="h-[43%] w-[49px] bg-[#cdcdcd]" />
      <svg width="51" height="51" viewBox="0 0 51 51" className="mt-auto shrink-0" fill="#606060">
        <path d="M14 16v8l11 11 11-11v-8L25 27z" />
      </svg>
    </div>
  );
}

/* ---------- Taskbar ---------- */

function OfficeTile({ letter, from, to }: { letter: string; from: string; to: string }) {
  return (
    <>
      <defs>
        <linearGradient id={`tile-${letter}`} x1="0" y1="0" x2="1" y2="1">
          <stop offset="0" stopColor={from} />
          <stop offset="1" stopColor={to} />
        </linearGradient>
      </defs>
      <rect x="0" y="15" width="36" height="36" rx="3" fill={`url(#tile-${letter})`} />
      <text x="18" y="43" textAnchor="middle" fontFamily="Open Sans, sans-serif" fontWeight="700" fontSize="27" fill="#fff">
        {letter}
      </text>
    </>
  );
}

function TeamsIcon({ size }: { size: number }) {
  return (
    <svg width={size} height={size} viewBox="0 0 76 76">
      <circle cx="38" cy="13" r="11" fill="#7b83eb" />
      <circle cx="60" cy="18" r="8" fill="#5059c9" />
      <path d="M44 28h28v20c0 10-8 16-16 14z" fill="#5059c9" />
      <path d="M22 28h34v24c0 20-32 22-34 2z" fill="#7b83eb" />
      <path d="M22 28h18v24H22z" fill="#4b52b8" opacity=".6" />
      <rect x="0" y="18" width="36" height="36" rx="3" fill="#4b53bc" />
      <path d="M9 28h18M18 28v19" stroke="#fff" strokeWidth="5" />
      <circle cx="60" cy="59" r="16" fill="#fff" />
      <circle cx="60" cy="59" r="13" fill="#7fba00" />
      <path d="M52 59l6 6 10-12" fill="none" stroke="#fff" strokeWidth="4" />
    </svg>
  );
}

const taskApps: { name: string; state?: "open" | "active"; icon: ReactNode }[] = [
  {
    name: "File Explorer",
    state: "open",
    icon: (
      <svg width="64" height="54" viewBox="0 0 64 54">
        <path d="M0 3q0-3 3-3h22q3 0 5 5l2 5-3 7H0z" fill="#dfa000" />
        <path d="M0 18h26q2 0 4-6 1-6 4-6h27q3 0 3 3v38q0 4-4 4H4q-4 0-4-4z" fill="#ffd35c" />
        <path d="M11 54V32q0-5 5-5h32q5 0 5 5v22H43V37H22v17z" fill="#3a94d9" />
      </svg>
    ),
  },
  {
    name: "Office",
    icon: (
      <svg width="56" height="70" viewBox="0 0 56 70">
        <defs>
          <linearGradient id="office-left" x1="0" y1="0" x2="0" y2="1">
            <stop offset="0" stopColor="#8a1212" />
            <stop offset=".5" stopColor="#c8202f" />
            <stop offset="1" stopColor="#b94a9c" />
          </linearGradient>
          <linearGradient id="office-right" x1="0" y1="0" x2="0" y2="1">
            <stop offset="0" stopColor="#f08a00" />
            <stop offset=".5" stopColor="#d83b01" />
          </linearGradient>
        </defs>
        <path d="M0 15L28 0l7 3v12L14 22v29l-10 4-4-2z" fill="url(#office-left)" />
        <path d="M10 54h26v10l-8 6-15-8z" fill="#d42038" />
        <path d="M35 1l17 5q4 1 4 6v46q0 4-4 5l-17 6z" fill="url(#office-right)" />
      </svg>
    ),
  },
  {
    name: "Outlook",
    icon: (
      <svg width="72" height="66" viewBox="0 0 72 66">
        <path d="M20 3q0-3 3-3h42q3 0 3 3v40H20z" fill="#0a6ab8" />
        <path d="M20 9h16v14H20zM36 23h16v14H36z" fill="#1183d6" />
        <path d="M36 9h16v14H36zM52 23h16v14H52z" fill="#28a8ea" />
        <path d="M52 9h16v14H52z" fill="#50d9ff" />
        <path d="M17 32l27 16 28-17v29q0 3-3 3H20q-3 0-3-3z" fill="#1a8fe0" />
        <path d="M72 33v27q0 3-3 3H20z" fill="#28a4ea" />
        <OfficeTile letter="O" from="#1784d8" to="#0b60bb" />
      </svg>
    ),
  },
  {
    name: "Firefox",
    state: "active",
    icon: (
      <svg width="66" height="66" viewBox="0 0 66 66">
        <defs>
          <linearGradient id="fox" x1=".8" y1="0" x2=".2" y2="1">
            <stop offset="0" stopColor="#fff44f" />
            <stop offset=".4" stopColor="#ff980e" />
            <stop offset=".7" stopColor="#ff3647" />
            <stop offset="1" stopColor="#e31587" />
          </linearGradient>
        </defs>
        <path d="M42 0c8 6 10 11 12 17 8 6 11 14 11 23 0 15-14 26-32 26S1 54 1 38C1 30 4 22 8 18l1 4c1-5 3-9 6-11l3 9c4-2 10-1 14-1C35 12 38 5 42 0z" fill="url(#fox)" />
        <circle cx="34" cy="33" r="14" fill="#7542e5" />
        <path d="M22 20c4-4 12-4 18 0-2 5-5 6-11 6-4 0-5 2-4 4-8-2-6-7-3-10z" fill="#ff980e" />
        <path d="M30 19c8-5 18 2 17 12-3-6-10-9-17-12z" fill="#b833e1" />
      </svg>
    ),
  },
  {
    name: "Word",
    icon: (
      <svg width="72" height="66" viewBox="0 0 72 66">
        <path d="M17 4q0-3 3-3h49q3 0 3 3v14H17z" fill="#41a5ee" />
        <path d="M17 18h55v15H17z" fill="#2b7cd3" />
        <path d="M17 33h55v15H17z" fill="#185abd" />
        <path d="M17 48h55v13q0 3-3 3H20q-3 0-3-3z" fill="#103f91" />
        <OfficeTile letter="W" from="#1f5fc6" to="#103f91" />
      </svg>
    ),
  },
  {
    name: "Excel",
    icon: (
      <svg width="72" height="66" viewBox="0 0 72 66">
        <path d="M17 4q0-3 3-3h24v17H17z" fill="#21a366" />
        <path d="M44 1h25q3 0 3 3v14H44z" fill="#33c481" />
        <path d="M17 18h27v30H17z" fill="#185c37" />
        <path d="M44 18h28v15H44z" fill="#21a366" />
        <path d="M44 33h28v15H44z" fill="#107c41" />
        <path d="M17 48h55v13q0 3-3 3H20q-3 0-3-3z" fill="#185c37" />
        <OfficeTile letter="X" from="#138a48" to="#0c6132" />
      </svg>
    ),
  },
  {
    name: "Notepad",
    icon: (
      <svg width="70" height="66" viewBox="0 0 70 66">
        <defs>
          <linearGradient id="pad" x1=".2" y1="0" x2=".7" y2="1">
            <stop offset="0" stopColor="#e2f3f7" />
            <stop offset="1" stopColor="#5fb3c9" />
          </linearGradient>
        </defs>
        <path d="M62 8l4 2v46l-14 6z" fill="#b5813a" />
        <path d="M60 8l3 48-12 8-36-12z" fill="#eef1f2" stroke="#b9c0c4" />
        <path d="M25 6l36 6-22 46L1 48z" fill="url(#pad)" />
        <path d="M26 6l36 6" stroke="#777" strokeWidth="7" strokeDasharray="2 2" />
      </svg>
    ),
  },
  {
    name: "Calculator",
    icon: (
      <svg width="56" height="72" viewBox="0 0 56 72">
        <rect width="56" height="72" rx="3" fill="#77828a" />
        <rect x="7" y="6" width="42" height="12" rx="2" fill="#40d0f5" />
        <g fill="#ced7dd">
          <rect x="7" y="24" width="12" height="12" rx="2" />
          <rect x="22" y="24" width="12" height="12" rx="2" />
          <rect x="37" y="24" width="12" height="12" rx="2" />
          <rect x="7" y="39" width="12" height="12" rx="2" />
          <rect x="22" y="39" width="12" height="12" rx="2" />
          <rect x="7" y="54" width="12" height="12" rx="2" />
          <rect x="22" y="54" width="12" height="12" rx="2" />
        </g>
        <rect x="37" y="39" width="12" height="27" rx="2" fill="#14468a" />
      </svg>
    ),
  },
  {
    name: "Zoom",
    icon: (
      <svg width="68" height="68" viewBox="0 0 68 68">
        <rect width="68" height="68" rx="22" fill="#4a8cff" />
        <path d="M14 23h22q7 0 7 7v15H21q-7 0-7-7zM45 31l9-8v22l-9-8z" fill="#fff" />
      </svg>
    ),
  },
  { name: "Teams", state: "open", icon: <TeamsIcon size={76} /> },
  {
    name: "NonProfitEasy",
    icon: (
      <svg width="48" height="72" viewBox="0 0 48 72">
        <circle cx="24" cy="11" r="11" fill="#f5b01a" />
        <path d="M1 26h13l10 15 10-15h13L31 49l17 23H34L24 58 14 72H0l17-23z" fill="#0055a5" />
      </svg>
    ),
  },
];

function Taskbar() {
  return (
    <footer className="flex h-[120px] shrink-0 items-stretch bg-[linear-gradient(100deg,#d3dce3_0%,#d6dae4_5%,#e3d9d6_8%,#ddd5e0_11%,#e0d5e4_14%,#d3dce6_18%,#d6d9e2_22%,#cfdfe2_26%,#e0d3e2_29%,#d5dbe4_33%,#e5d3de_38%,#e3d5da_42%,#d3dae4_48%,#ddd6da_54%,#d0dce2_60%,#d9dbd8_66%,#d8d9e8_71%,#e6d9d8_75%,#e4d5de_82%,#d0dfdc_87%,#d3dae6_91%,#dcdadf_96%,#e6d9d3_100%)]">
      <button aria-label="Start" className="flex w-36 items-center justify-center">
        <svg width="48" height="48" viewBox="0 0 48 48">
          <path d="M0 7l19-3v19H0zM21 3l27-3v23H21zM0 25h19v19L0 41zM21 25h27v23l-27-3z" />
        </svg>
      </button>
      <button aria-label="Search Windows" className="mr-[7px] flex w-36 items-center justify-center">
        <svg width="48" height="48" viewBox="0 0 48 48" fill="none" stroke="#000" strokeWidth="3">
          <circle cx="31" cy="17" r="15" />
          <path d="M20 28L1 47" />
        </svg>
      </button>
      {taskApps.map((a) => (
        <div key={a.name} className="flex w-[147px] justify-center">
          <button
            aria-label={a.name}
            className={`relative flex items-center justify-center border-b-[6px] pt-[6px] ${
              a.state === "active"
                ? "w-36 border-[#0078d7] bg-[#f3eff5]"
                : a.state === "open"
                  ? "w-[120px] border-[#0078d7]"
                  : "w-[120px] border-transparent"
            }`}
          >
            {a.icon}
            {a.state === "active" && <span className="absolute inset-y-0 right-0 w-3 border-l-[3px] border-[#c9c2cf] bg-[#e9e3ec]" />}
          </button>
        </div>
      ))}

      <div className="ml-auto flex items-center">
        <button aria-label="Show hidden icons" className="flex w-24 justify-center">
          <svg width="38" height="22" viewBox="0 0 38 22" fill="none" stroke="#000" strokeWidth="3">
            <path d="M2 20L19 3l17 17" />
          </svg>
        </button>
        <button aria-label="Teams status" className="flex w-24 justify-center">
          <TeamsIcon size={50} />
        </button>
        <button aria-label="OneDrive" className="flex w-24 justify-center">
          <svg width="50" height="32" viewBox="0 0 50 32">
            <path d="M12 12C14 4 20 0 27 0c7 0 12 4 14 11L26 22z" fill="#0364b8" />
            <path d="M12 11c5-1 9 1 14 6L5 29C-4 22 1 11 12 11z" fill="#0078d4" />
            <path d="M30 16c3-5 8-6 12-5 10 2 10 14 4 18z" fill="#1490df" />
            <path d="M5 29l25-14 16 14q-2 3-6 3H10q-3 0-5-3z" fill="#28a8ea" />
          </svg>
        </button>
        <button aria-label="Battery" className="flex w-24 justify-center">
          <svg width="46" height="28" viewBox="0 0 46 28">
            <path d="M2 2h39v24H2zM43 10v9" fill="none" stroke="#000" strokeWidth="3" />
            <path d="M7 6h8v16H7z" />
          </svg>
        </button>
        <button aria-label="Network" className="flex w-24 justify-center">
          <svg width="38" height="38" viewBox="0 0 38 38" fill="none" stroke="#000" strokeWidth="3">
            <path d="M2 37C2 18 18 2 37 2M11 37c0-14 12-25 26-25M20 37c0-9 8-16 17-16" />
            <circle cx="32" cy="33" r="4" fill="#000" stroke="none" />
          </svg>
        </button>
        <button aria-label="Volume" className="flex w-24 justify-center">
          <svg width="48" height="44" viewBox="0 0 48 44" fill="none" stroke="#000" strokeWidth="3">
            <path d="M2 15h7l8-10v34l-8-10H2zM25 15c4 4 4 10 0 14M31 9c7 8 7 18 0 26" />
            <path d="M38 3c10 12 10 26 0 38" stroke="#999" />
          </svg>
        </button>
        <button aria-label="Windows Ink" className="flex w-[120px] justify-center">
          <svg width="50" height="50" viewBox="0 0 50 50" fill="none" stroke="#000" strokeWidth="3">
            <path d="M17 34L36 4c2-4 8-1 6 4L24 40l-9 7zM31 11l7 5M34 30l8-9c6-2 8 5 3 7l-7 3M17 29C5 28-2 36 4 44c2 3 5 4 9 4" />
          </svg>
        </button>
        <div className="ml-[26px] pt-[3px] text-center text-[34px] leading-[56px] text-black">
          <div>12:47 PM</div>
          <div>5/6/2021</div>
        </div>
        <button aria-label="Notifications" className="mr-[60px] ml-[63px]">
          <svg width="48" height="48" viewBox="0 0 48 48" fill="none" stroke="#000" strokeWidth="3">
            <path d="M2 2h44v36H31l-7 8-7-8H2z" />
          </svg>
        </button>
      </div>
      <button aria-label="Show desktop" className="w-[15px] border-l-2 border-[#a9a9ae]" />
    </footer>
  );
}

export default function App() {
  return (
    <div className="flex h-screen flex-col overflow-hidden font-['Open_Sans',sans-serif]">
      <TitleBar />
      <Toolbar />
      <div className="flex min-h-0 flex-1">
        <div className="flex min-w-0 flex-1 flex-col">
          <AppHeader />
          <div className="flex min-h-0 flex-1">
            <Sidebar />
            <div className="relative z-10 flex">
              <SubMenu />
            </div>
            <Content />
          </div>
        </div>
        <Scrollbar />
      </div>
      <Taskbar />
    </div>
  );
}
